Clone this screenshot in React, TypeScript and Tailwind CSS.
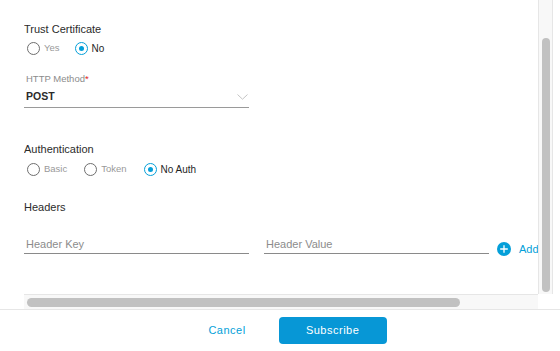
import React from "react"

function Radio({ label, checked }: { label: string; checked?: boolean }) {
  return (
    <div className="flex items-center gap-[4px]">
      <span
        className={
          checked
            ? "flex h-[13px] w-[13px] items-center justify-center rounded-full border border-[#049fd9]"
            : "flex h-[13px] w-[13px] items-center justify-center rounded-full border border-[#6e6e6e]"
        }
      >
        {checked && <span className="h-[5px] w-[5px] rounded-full bg-[#049fd9]" />}
      </span>
      <span className={checked ? "text-[10px] text-[#1f1f1f]" : "text-[9.5px] text-[#999999]"}>{label}</span>
    </div>
  )
}

function Chevron() {
  return (
    <svg width="11" height="6" viewBox="0 0 11 6" fill="none">
      <path d="M0.5 0.5L5.5 5.2L10.5 0.5" stroke="#c4c4c4" strokeWidth="1" />
    </svg>
  )
}

function AddIcon() {
  return (
    <svg width="14" height="14" viewBox="0 0 14 14">
      <circle cx="7" cy="7" r="7" fill="#049fd9" />
      <path d="M7 3.2V10.8M3.2 7H10.8" stroke="#fff" strokeWidth="1.3" />
    </svg>
  )
}

export default function App() {
  return (
    <div className="flex h-[351px] w-[560px] flex-col bg-white font-['Liberation_Sans',Arial,sans-serif] text-[#2b2b2b]">
      <div className="flex h-[309px] flex-col pl-6 pr-[7px]">
        <div className="flex min-h-0 flex-1">
          <div className="min-w-0 flex-1 overflow-hidden">
            <div className="flex w-[640px] flex-col">
              <div className="mt-[22px] h-[14px] text-[11px] leading-[14px]">Trust Certificate</div>
              <div className="ml-[3px] mt-[5px] flex h-[14px] items-center gap-[15px]">
                <Radio label="Yes" />
                <Radio label="No" checked />
              </div>

              <div className="mt-[18px] h-[12px] pl-[2px] text-[9.5px] leading-[12px] text-[#8c8c8c]">
                HTTP Method<span className="text-[#e2231a]">*</span>
              </div>
              <div className="flex h-[23px] w-[225px] items-center justify-between border-b border-[#9a9a9a] pl-[2px] pr-[1px] pt-[2px]">
                <span className="text-[10.5px] font-bold text-[#2b2b2b]">POST</span>
                <Chevron />
              </div>

              <div className="mt-[34px] h-[14px] text-[11px] leading-[14px]">Authentication</div>
              <div className="ml-[3px] mt-[6px] flex h-[14px] items-center gap-[17px]">
                <Radio label="Basic" />
                <Radio label="Token" />
                <Radio label="No Auth" checked />
              </div>

              <div className="mt-[24px] h-[14px] text-[11px] leading-[14px]">Headers</div>
              <div className="mt-[21px] flex items-start">
                <div className="h-[19px] w-[225px] border-b border-[#8a8a8a] pl-[2px] text-[11px] leading-[18px] text-[#8c8c8c]">
                  Header Key
                </div>
                <div className="ml-[15px] h-[19px] w-[225px] border-b border-[#8a8a8a] pl-[2px] text-[11px] leading-[18px] text-[#8c8c8c]">
                  Header Value
                </div>
                <div className="ml-[8px] mt-[7px] flex h-[14px] items-center gap-[8px]">
                  <AddIcon />
                  <span className="text-[11px] text-[#049fd9]">Add</span>
                </div>
              </div>
            </div>
          </div>
          <div className="flex w-[15px] justify-center border-x border-[#e6e6e6] bg-[#f8f8f8] pb-[2px] pt-[38px]">
            <div className="h-full w-[8px] rounded-full bg-[#c1c1c1]" />
          </div>
        </div>
        <div className="flex h-[15px]">
          <div className="flex flex-1 items-center border-t border-[#e6e6e6] bg-[#f8f8f8] pl-[3px]">
            <div className="h-[9px] w-[433px] rounded-full bg-[#c1c1c1]" />
          </div>
          <div className="w-[15px] bg-white" />
        </div>
      </div>
      <div className="flex flex-1 items-center justify-center border-t border-[#e6e6e6] pl-[35px]">
        <button className="text-[11px] tracking-[0.5px] text-[#049fd9]">Cancel</button>
        <button className="ml-[33px] h-[27px] w-[108px] rounded-[4px] bg-[#0797d6] text-[11px] tracking-[0.5px] text-white">
          Subscribe
        </button>
      </div>
    </div>
  )
}
